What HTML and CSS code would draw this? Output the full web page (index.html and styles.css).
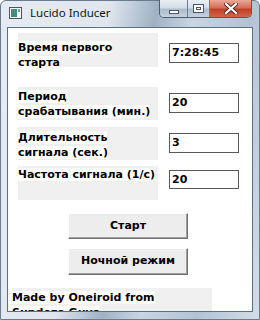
FILE: index.html
```html
<!DOCTYPE html>
<html lang="ru">
<head>
    <meta charset="UTF-8">
    <title>Lucido Inducer</title>
    <link rel="stylesheet" href="styles.css">
</head>
<body>
<div class="window">
    <div class="titlebar">
        <svg class="app-icon" width="13" height="12" viewBox="0 0 13 12">
            <rect x="0.5" y="0.5" width="12" height="11" fill="#fff" stroke="#4a5560"/>
            <rect x="2" y="2" width="6" height="8" fill="#3f8f7c"/>
            <rect x="9" y="2" width="2" height="3" fill="#6aa7d6"/>
        </svg>
        <span class="title">Lucido Inducer</span>
        <div class="caption">
            <span class="cbtn min"><i></i></span>
            <span class="cbtn max"><i></i></span>
            <span class="cbtn close">
                <svg width="14" height="11" viewBox="0 0 14 11">
                    <path d="M2 1 L12 10 M12 1 L2 10" stroke="#5a2a22" stroke-width="4" stroke-linecap="square"/>
                    <path d="M2 1 L12 10 M12 1 L2 10" stroke="#fff" stroke-width="2.2" stroke-linecap="square"/>
                </svg>
            </span>
        </div>
    </div>
    <div class="client">
        <div class="row r1">
            <div class="label"><span>Время первого<br>старта</span></div>
            <div class="field">7:28:45</div>
        </div>
        <div class="row r2">
            <div class="label"><span>Период<br>срабатывания (мин.)</span></div>
            <div class="field">20</div>
        </div>
        <div class="row r3">
            <div class="label"><span>Длительность<br>сигнала (сек.)</span></div>
            <div class="field">3</div>
        </div>
        <div class="row r4">
            <div class="label"><span>Частота сигнала (1/с)</span></div>
            <div class="field">20</div>
        </div>
        <div class="buttons">
            <div class="btn b1">Старт</div>
            <div class="btn b2">Ночной режим</div>
        </div>
        <div class="credit"><span>Made by Oneiroid from<br>Sundeze Guys</span></div>
    </div>
</div>
</body>
</html>
```

FILE: styles.css
```css
*{
    margin: 0;padding: 0;
    box-sizing: border-box;
}
body{
    width: 260px;
    height: 320px;
    overflow: hidden;
    background: #fff;
}
.window{
    width: 260px;
    height: 320px;
    border: 1px solid #6a7b8c;
    border-radius: 6px 6px 0 0;
    background: linear-gradient(100deg, #e4ebf2 0%, #dfe6ee 35%, #9fb2c4 50%, #c9d5e1 62%, #b3c3d3 80%, #d2dde8 100%);
    display: flex;
    flex-direction: column;
}
.titlebar{
    height: 26px;
    display: flex;
    align-items: flex-start;
    padding-left: 8px;
    padding-right: 7px;
}
.app-icon{margin-top: 6px}
.title{
    font-family: "Noto Sans", sans-serif;
    font-size: 11.5px;
    color: #101820;
    margin-left: 8px;
    margin-top: 4px;
}
.caption{
    margin-left: auto;
    display: flex;
    height: 18px;
    margin-top: -1px;
    border: 1px solid #4d5c6c;
    border-top: none;
    border-radius: 0 0 5px 5px;
    overflow: hidden;
}
.cbtn{
    height: 17px;
    display: flex;
    align-items: center;
    justify-content: center;
    background: linear-gradient(#e9eef4 0%, #d3dde7 45%, #aebdcc 55%, #c5d2de 100%);
    border-right: 1px solid #6f7f90;
}
.min{width: 28px}
.max{width: 22px}
.close{
    width: 41px;
    border-right: none;
    background: linear-gradient(#e8a898 0%, #d66e5a 45%, #c13e27 55%, #d2654b 100%);
}
.min i{
    display: block;
    width: 10px;
    height: 4px;
    margin-top: 6px;
    background: #fff;
    border: 1px solid #4a5a6a;
}
.max i{
    display: block;
    width: 11px;
    height: 9px;
    background: #fff;
    border: 1px solid #4a5a6a;
    box-shadow: inset 0 0 0 2px #fff, inset 0 0 0 3px #4a5a6a;
}
.client{
    flex: 1;
    margin: 0 6px 7px 6px;
    background: #fff;
    border: 1px solid #5f7082;
    overflow: hidden;
    font-family: "DejaVu Sans", sans-serif;
    font-weight: bold;
    font-size: 11px;
    line-height: 15px;
    color: #000;
}
.row{
    display: flex;
    align-items: flex-start;
    padding-left: 10px;
}
.label{
    width: 140px;
    background: #f0f0f0;
    white-space: nowrap;
}
.label span{background: #fff}
.field{
    width: 70px;
    height: 20px;
    margin-left: 11px;
    border: 1px solid #5a5a5a;
    padding-left: 2px;
    line-height: 18px;
    background: #fff;
}
.r1{margin-top: 5px}
.r1 .label{height: 34px;padding-top: 7px}
.r1 .field{margin-top: 10px}
.r2{margin-top: 20px}
.r2 .label{height: 33px;padding-top: 2px}
.r2 .field{margin-top: 6px}
.r3{margin-top: 7px}
.r3 .label{height: 33px;padding-top: 3px}
.r3 .field{margin-top: 6px}
.r4{margin-top: 6px}
.r4 .label{height: 34px;padding-top: 1px}
.r4 .field{margin-top: 4px;height: 19px;line-height: 17px}
.buttons{
    display: flex;
    flex-direction: column;
    gap: 9px;
    padding-left: 60px;
    margin-top: 13px;
}
.btn{
    width: 120px;
    height: 26px;
    background: #ededed;
    border: 1px solid;
    border-color: #fff #707070 #707070 #fff;
    box-shadow: inset -1px -1px 0 #a0a0a0;
    text-align: center;
    line-height: 23px;
}
.b2{height: 27px}
.credit{
    margin-top: 13px;
    margin-left: 4px;
    width: 200px;
    height: 30px;
    background: #f0f0f0;
    padding-top: 2px;
    white-space: nowrap;
}
.credit span{background: #fff}
```
